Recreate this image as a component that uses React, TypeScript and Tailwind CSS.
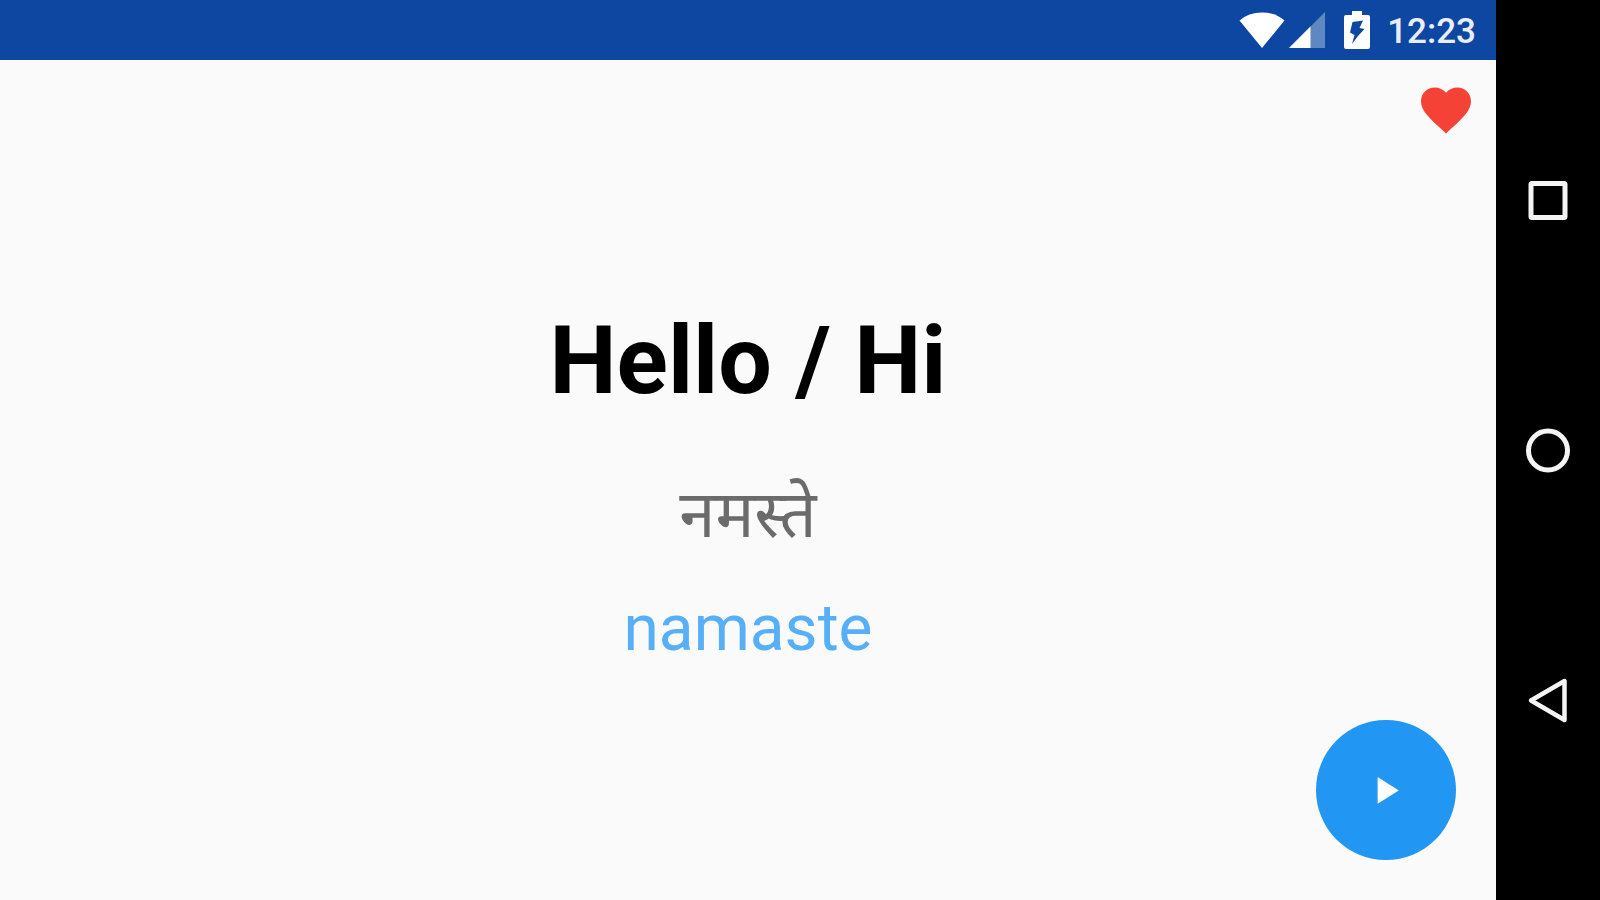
import { useState } from "react";

function WifiIcon() {
  return (
    <svg className="h-9 w-[46px]" viewBox="0 0 46 36" fill="#fff" aria-hidden="true">
      <path d="M0.500 8.500C6.500 3.200 14 0.500 23 0.500S39.500 3.200 45.500 8.500L23 36Z" />
    </svg>
  );
}

function SignalIcon() {
  return (
    <svg className="h-9 w-9" viewBox="0 0 36 36" aria-hidden="true">
      <path d="M36 0V36H0Z" fill="#5f87c2" />
      <path d="M21.500 14.500V36H0Z" fill="#fff" />
    </svg>
  );
}

function BatteryIcon() {
  return (
    <svg className="h-[38px] w-[26px]" viewBox="0 0 26 38" aria-hidden="true">
      <path
        d="M8 0H18V4H24Q26 4 26 6V36Q26 38 24 38H2Q0 38 0 36V6Q0 4 2 4H8Z"
        fill="#fff"
      />
      <path d="M8.500 11L19 9.500L15.500 17L20.500 18L14 25L8 33L10.500 24L6 21.500Z" fill="#0d47a1" />
    </svg>
  );
}

function StatusBar() {
  return (
    <header className="flex h-[60px] shrink-0 items-center justify-end bg-[#0d47a1] pr-5">
      <div className="mr-[19px] flex items-center gap-1">
        <WifiIcon />
        <SignalIcon />
      </div>
      <BatteryIcon />
      <time className="ml-[17px] pt-1 text-[35px] leading-10 font-medium text-[#e8eef7]">12:23</time>
    </header>
  );
}

function SystemNav() {
  const button = "flex h-[250px] w-full items-center justify-center";
  return (
    <nav
      aria-label="System navigation"
      className="flex w-[104px] shrink-0 flex-col items-center justify-center bg-black"
    >
      <button type="button" aria-label="Recent apps" className={button}>
        <svg className="size-12" viewBox="0 0 48 48" fill="none" stroke="#f4f4f4" strokeWidth="5">
          <rect x="7" y="7.500" width="34" height="34" rx="1" strokeLinejoin="round" />
        </svg>
      </button>
      <button type="button" aria-label="Home" className={button}>
        <svg className="size-12" viewBox="0 0 48 48" fill="none" stroke="#f4f4f4" strokeWidth="5">
          <circle cx="24" cy="24.500" r="19.500" />
        </svg>
      </button>
      <button type="button" aria-label="Back" className={button}>
        <svg className="size-12" viewBox="0 0 48 48" fill="none" stroke="#f4f4f4" strokeWidth="4.500">
          <path d="M7 24.500L40.500 5V44Z" strokeLinejoin="round" />
        </svg>
      </button>
    </nav>
  );
}

export default function App() {
  const [favourite, setFavourite] = useState(true);

  return (
    <div className="flex min-h-screen bg-[#fafafa] font-['Roboto','Noto_Sans',sans-serif]">
      <div className="flex min-w-0 flex-1 flex-col">
        <StatusBar />
        <main className="relative flex flex-1 flex-col items-center justify-center pt-[14px] text-center">
          <h1 className="text-[95px] leading-[112px] font-bold text-black">Hello / Hi</h1>
          <p lang="hi" className="mt-[58px] text-[65px] leading-20 text-[#6b6b6b]">
            नमस्ते
          </p>
          <p className="mt-[34px] text-[64px] leading-20 text-[#56aff7]">namaste</p>

          <button
            type="button"
            aria-label="Favourite"
            aria-pressed={favourite}
            onClick={() => setFavourite(!favourite)}
            className="absolute top-5 right-5"
          >
            <svg className="size-[60px]" viewBox="0 0 24 24" fill={favourite ? "#f44336" : "#bdbdbd"}>
              <path d="M12 21.350l-1.450-1.320C5.400 15.360 2 12.280 2 8.500 2 5.420 4.420 3 7.500 3c1.740 0 3.410.810 4.500 2.090C13.090 3.810 14.760 3 16.500 3 19.580 3 22 5.420 22 8.500c0 3.780-3.400 6.860-8.550 11.540L12 21.350z" />
            </svg>
          </button>
          <button
            type="button"
            aria-label="Play pronunciation"
            className="absolute right-10 bottom-10 flex size-[140px] items-center justify-center rounded-full bg-[#2196f3]"
          >
            <svg className="size-12" viewBox="0 0 24 24" fill="#fff">
              <path d="M7.800 5.500v13.400l10.600-6.700z" />
            </svg>
          </button>
        </main>
      </div>
      <SystemNav />
    </div>
  );
}
